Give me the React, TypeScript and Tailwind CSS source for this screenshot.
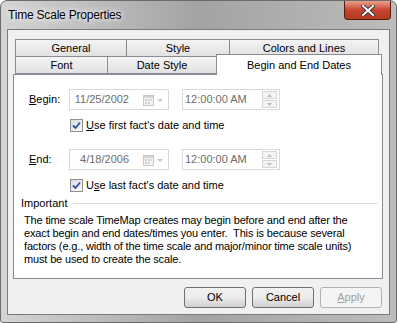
import React from 'react';

const ui = { fontFamily: '"Liberation Sans", Arial, sans-serif' };

function Tab({ label, w, active }: { label: string; w: string; active?: boolean }) {
  return (
    <div
      className={`${w} flex items-center justify-center border border-[#898c95] -mr-px text-[11px] text-black ${
        active
          ? 'relative z-10 h-[21px] -mt-[2px] bg-white border-b-0'
          : 'h-[18px] bg-gradient-to-b from-[#f4f4f4] to-[#e1e1e1]'
      }`}
    >
      {label}
    </div>
  );
}

function CalendarGlyph() {
  return (
    <svg width="22" height="12" viewBox="0 0 22 12">
      <rect x="0.5" y="1.5" width="10" height="10" fill="#f4f4f4" stroke="#c8c8c8" />
      <rect x="1" y="2" width="9" height="2" fill="#d4d4d4" />
      <g fill="#cfcfcf">
        <rect x="2" y="5" width="2" height="2" />
        <rect x="5" y="5" width="2" height="2" />
        <rect x="8" y="5" width="1" height="2" />
        <rect x="2" y="8" width="2" height="2" />
        <rect x="5" y="8" width="2" height="2" />
      </g>
      <path d="M14 5h6l-3 3z" fill="#c8c8c8" />
    </svg>
  );
}

function Spinner() {
  return (
    <div className="flex flex-col gap-px mr-[2px]">
      {[0, 1].map((i) => (
        <div key={i} className="w-[15px] h-[8px] border border-[#d6d6d6] bg-[#f4f4f4] flex items-center justify-center">
          <svg width="5" height="3" viewBox="0 0 5 3">
            <path d={i === 0 ? 'M0 3h5L2.5 0z' : 'M0 0h5L2.5 3z'} fill="#bdbdbd" />
          </svg>
        </div>
      ))}
    </div>
  );
}

function Check() {
  return (
    <span className="w-[13px] h-[13px] border border-[#8e8f8f] bg-gradient-to-br from-[#dcdcdc] to-[#fafafa] flex items-center justify-center">
      <svg width="9" height="9" viewBox="0 0 9 9">
        <path d="M1 4.5l2.5 2.5L8 1.5" fill="none" stroke="#2a4dae" strokeWidth="1.8" />
      </svg>
    </span>
  );
}

function DateRow({ label, date, hot }: { label: string; date: string; hot: string }) {
  return (
    <div className="flex items-center h-[21px] pl-[15px]">
      <span className="w-[40px]">
        <u>{hot}</u>
        {label.slice(1)}:
      </span>
      <div className="w-[100px] h-[21px] border border-[#d9d9d9] flex items-center justify-between pl-[1px] pr-[3px] text-[#6d6d6d]">
        <span className="w-[58px] text-right">{date}</span>
        <CalendarGlyph />
      </div>
      <div className="ml-[13px] w-[98px] h-[21px] border border-[#d9d9d9] flex items-center justify-between pl-[2px] text-[#6d6d6d]">
        <span>12:00:00 AM</span>
        <Spinner />
      </div>
    </div>
  );
}

function CheckRow({ children }: { children: React.ReactNode }) {
  return (
    <div className="flex items-center gap-[3px] pl-[56px] h-[13px]">
      <Check />
      <span>{children}</span>
    </div>
  );
}

function Button({ children, disabled }: { children: React.ReactNode; disabled?: boolean }) {
  return (
    <div
      className={`w-[62px] h-[21px] rounded-[3px] border flex items-center justify-center text-[11px] ${
        disabled
          ? 'border-[#adb2b5] bg-[#f4f4f4] text-[#a0a0a0]'
          : 'border-[#707070] bg-gradient-to-b from-[#f2f2f2] via-[#ebebeb] to-[#d0d0d0] text-black'
      }`}
    >
      {children}
    </div>
  );
}

export default function App() {
  return (
    <div className="w-[398px] h-[323px] bg-white" style={ui}>
      <div className="w-[397px] h-[323px] rounded-t-[7px] rounded-b-[3px] border border-[#6b6b6b] bg-gradient-to-r from-[#d4d4d4] via-[#a3a3a3] to-[#bcbcbc] flex flex-col overflow-hidden">
        <div className="relative h-[28px] flex items-center pl-[7px]">
          <span className="text-[12px] tracking-[-0.2px] text-black [text-shadow:0_0_8px_#fff,0_0_4px_#fff]">Time Scale Properties</span>
          <div className="absolute right-[5px] top-0 w-[47px] h-[19px] rounded-b-[4px] border border-t-0 border-[#5a1a12] bg-gradient-to-b from-[#e8a08f] via-[#c8452e] to-[#b03a22] flex items-center justify-center">
            <svg width="14" height="11" viewBox="0 0 14 11">
              <path d="M2 1l10 9M12 1L2 10" stroke="#3a3a3a" strokeWidth="4" strokeLinecap="square" />
              <path d="M2 1l10 9M12 1L2 10" stroke="#fff" strokeWidth="2" strokeLinecap="square" />
            </svg>
          </div>
        </div>
        <div className="mx-[6px] h-[286px] border border-[#7a7a7a] bg-[#f0f0f0] text-[11px] text-black">
          <div className="ml-[5px] mt-[9px] w-[370px]">
            <div className="flex pl-[2px]">
              <Tab label="General" w="w-[112px]" />
              <Tab label="Style" w="w-[104px]" />
              <Tab label="Colors and Lines" w="w-[150px]" />
            </div>
            <div className="flex pl-[2px] -mt-px">
              <Tab label="Font" w="w-[93px]" />
              <Tab label="Date Style" w="w-[110px]" />
              <Tab label="Begin and End Dates" w="w-[166px]" active />
            </div>
            <div className="-mt-px h-[205px] border border-[#898c95] bg-white pt-[14px]">
              <DateRow label="Begin" hot="B" date="11/25/2002" />
              <div className="mt-[9px]">
                <CheckRow>
                  <u>U</u>se first fact's date and time
                </CheckRow>
              </div>
              <div className="mt-[17px]">
                <DateRow label="End" hot="E" date="4/18/2006" />
              </div>
              <div className="mt-[9px]">
                <CheckRow>
                  U<u>s</u>e last fact's date and time
                </CheckRow>
              </div>
              <div className="mt-[5px] pl-[7px] pr-[4px] flex items-center gap-[6px] h-[13px]">
                <span>Important</span>
                <div className="flex-1 h-0 border-t border-[#d5dfe5]" />
              </div>
              <p className="pl-[10px] mt-[4px] leading-[13px] tracking-[-0.15px] whitespace-pre">
                {'The time scale TimeMap creates may begin before and end after the\nexact begin and end dates/times you enter.  This is because several\nfactors (e.g., width of the time scale and major/minor time scale units)\nmust be used to create the scale.'}
              </p>
            </div>
          </div>
          <div className="flex justify-end gap-[6px] pr-[7px] mt-[8px]">
            <Button>OK</Button>
            <Button>Cancel</Button>
            <Button disabled>
              <u>A</u>pply
            </Button>
          </div>
        </div>
      </div>
    </div>
  );
}
